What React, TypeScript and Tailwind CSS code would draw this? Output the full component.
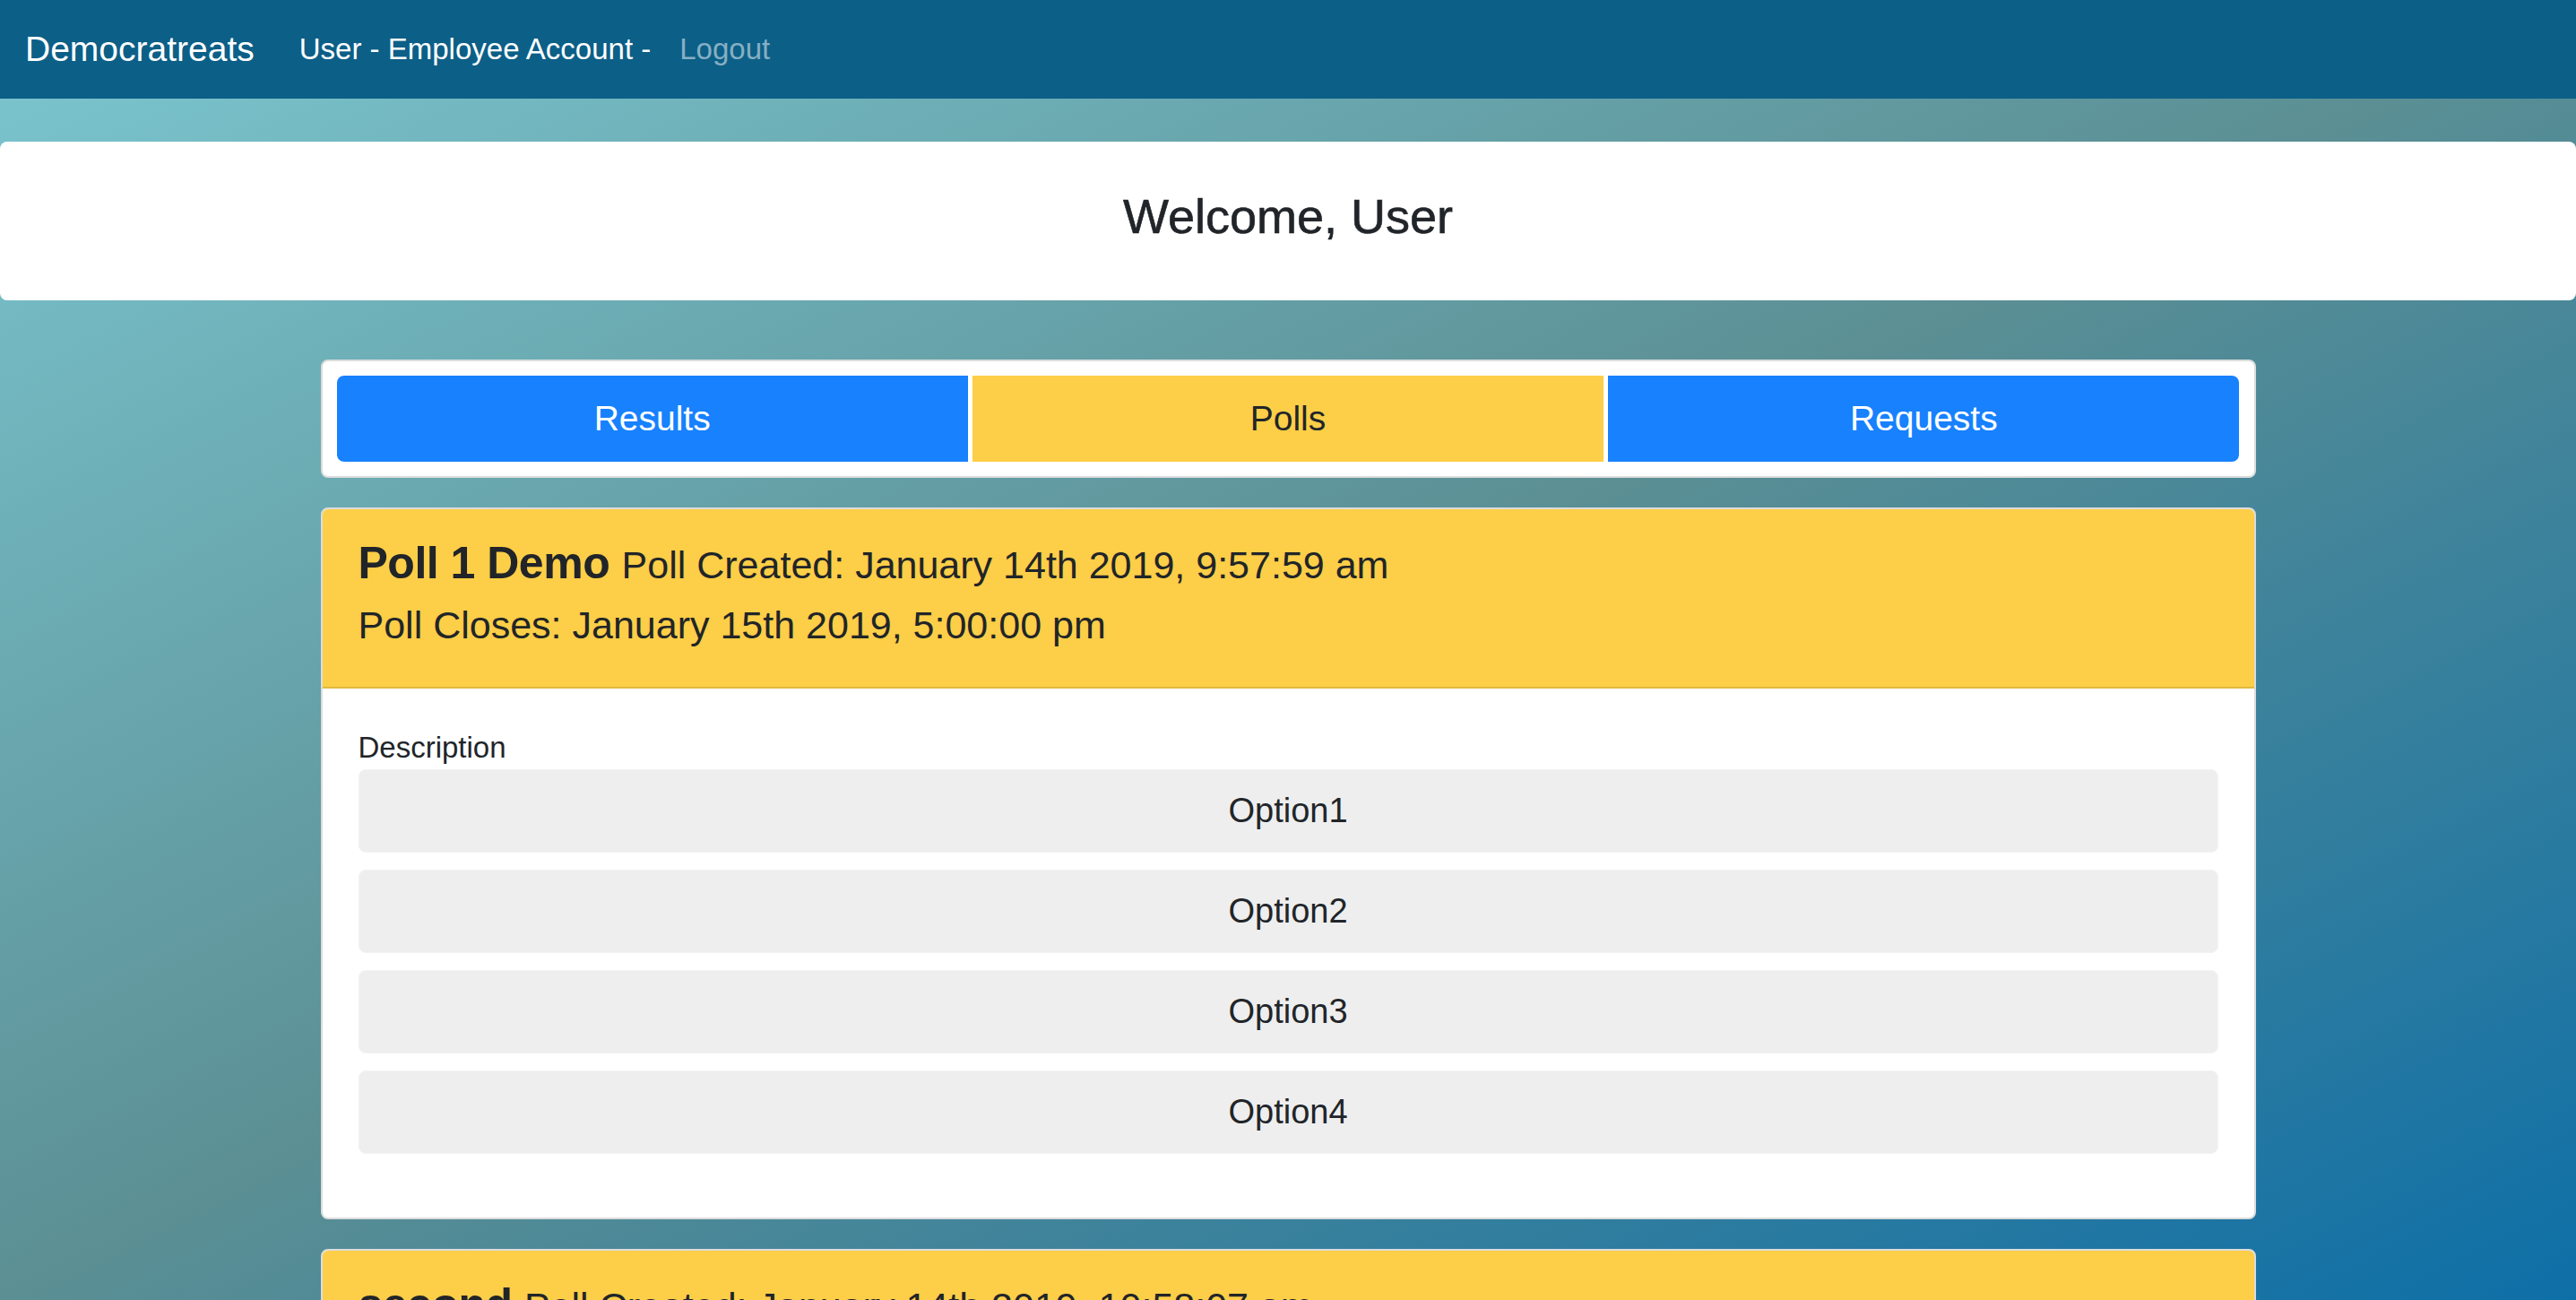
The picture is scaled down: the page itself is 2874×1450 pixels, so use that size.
import React from "react";

type Poll = {
    title: string;
    created: string;
    closes: string;
    description: string;
    options: string[];
};

const polls: Poll[] = [
    {
        title: "Poll 1 Demo",
        created: "January 14th 2019, 9:57:59 am",
        closes: "January 15th 2019, 5:00:00 pm",
        description: "Description",
        options: ["Option1", "Option2", "Option3", "Option4"],
    },
    {
        title: "second",
        created: "January 14th 2019, 10:58:07 am",
        closes: "January 16th 2019, 5:00:00 pm",
        description: "Description",
        options: ["Option1", "Option2"],
    },
];

const PollCard = ({ poll }: { poll: Poll }) => {
    return (
        <div className="mt-[33px] bg-white rounded-[8px] border-2 border-[#dcdcdc] overflow-hidden">
            <div className="bg-[#fdce47] border-b-2 border-[#e2b941] px-[40px] pt-[27px] pb-[39px] text-[#212529]">
                <h3 className="text-[50px] leading-[67px] font-bold tracking-[-0.5px] mb-[3px]">
                    {poll.title}{" "}
                    <span className="text-[43px] font-normal tracking-normal">Poll Created: {poll.created}</span>
                </h3>
                <p className="text-[43px] leading-[60px]">Poll Closes: {poll.closes}</p>
            </div>
            <div className="px-[40px] pt-[42px] pb-[71px] text-[#212529]">
                <p className="text-[33px] leading-[48px]">{poll.description}</p>
                <div className="flex flex-col gap-[19px]">
                    {poll.options.map((opt) => (
                        <div
                            key={opt}
                            className="h-[93px] flex items-center justify-center bg-[#eeeeee] border border-[#f3f3f3] rounded-[8px] text-[38px]"
                        >
                            {opt}
                        </div>
                    ))}
                </div>
            </div>
        </div>
    );
};

const App = () => {
    return (
        <div
            className="min-h-screen bg-fixed bg-[linear-gradient(to_bottom_right,#7cc7d1_0%,#5b8f94_50%,#0e6fa7_100%)] pb-[60px]"
            style={{ fontFamily: '"Liberation Sans", Arial, sans-serif' }}
        >
            <nav className="h-[110px] bg-[#0c5f87] flex items-center px-[28px]">
                <span className="text-white text-[39px] mr-[34px]">Democratreats</span>
                <span className="text-white text-[33px] px-[16px]">User - Employee Account -</span>
                <span className="text-[#86afc3] text-[33px] px-[16px]">Logout</span>
            </nav>

            <div className="mt-[48px] h-[177px] bg-white rounded-[8px] flex items-center justify-center pb-[10px]">
                <h3 className="text-[54px] text-[#212529] font-medium [-webkit-text-stroke:0.6px_#212529]">
                    Welcome, User
                </h3>
            </div>

            <div className="w-[2159px] mx-auto mt-[66px]">
                <div className="bg-white rounded-[8px] border-2 border-[#dcdcdc] p-[16px] flex gap-[5px]">
                    <button className="flex-1 h-[96px] bg-[#1781fe] text-white text-[39px] rounded-l-[8px]">
                        Results
                    </button>
                    <button className="flex-1 h-[96px] bg-[#fdce47] text-[#212529] text-[39px]">
                        Polls
                    </button>
                    <button className="flex-1 h-[96px] bg-[#1781fe] text-white text-[39px] rounded-r-[8px]">
                        Requests
                    </button>
                </div>

                {polls.map((p) => (
                    <PollCard key={p.title} poll={p} />
                ))}
            </div>
        </div>
    );
};

export default App;
